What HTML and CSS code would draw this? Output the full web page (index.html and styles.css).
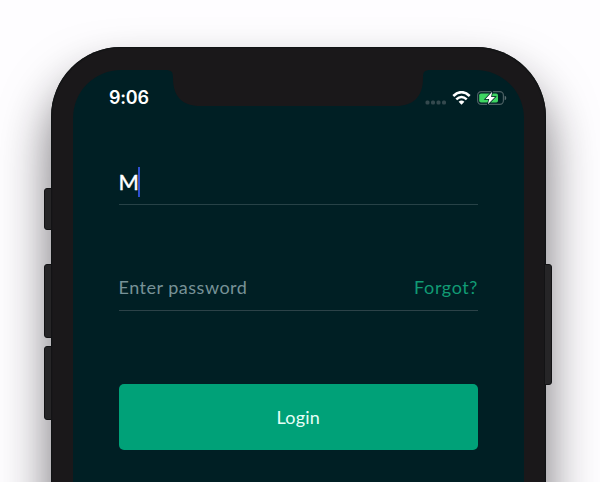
FILE: index.html
```html
<!DOCTYPE html>
<html lang="en">
<head>
<meta charset="utf-8">
<title>Login</title>
<link rel="stylesheet" href="styles.css">
</head>
<body>
<main class="phone">
  <span class="side-key mute"></span>
  <span class="side-key volume-up"></span>
  <span class="side-key volume-down"></span>
  <span class="side-key power"></span>
  <section class="screen">
    <svg class="notch" width="266" height="37" viewBox="0 0 266 37" aria-hidden="true"><path d="M0 0C7 0 8 2 8 8C8 27 18 36 35 36H231C248 36 258 27 258 8C258 2 259 0 266 0Z"/></svg>
    <header class="status">
      <span class="time">9:06</span>
      <div class="indicators">
        <svg class="cellular" width="22" height="5" viewBox="0 0 22 5" aria-hidden="true"><rect x=".5" y=".5" width="4" height="4" rx="1.5"/><rect x="6" y=".5" width="4" height="4" rx="1.5"/><rect x="11.5" y=".5" width="4" height="4" rx="1.5"/><rect x="17" y=".5" width="4" height="4" rx="1.5"/></svg>
        <svg class="wifi" width="19" height="14" viewBox="0 0 18 14" aria-hidden="true"><path class="wave" d="M.8 5Q9 -2.6 17.2 5M3.8 8.4Q9 3.6 14.2 8.4"/><path class="wifi-base" d="M6.1 10.8Q9 8.2 11.9 10.8L9 13.8Z"/></svg>
        <svg class="battery" width="30" height="14" viewBox="0 0 30 14" aria-hidden="true"><rect class="shell" x=".6" y=".6" width="25.8" height="12.8" rx="3.6"/><path class="cap" d="M27.7 4.7Q29.3 5.1 29.3 7T27.7 9.3Z"/><rect class="charge" x="2.2" y="2.4" width="18.8" height="9.2" rx="1.8"/><path class="bolt" d="M15.2 .8L8.5 8H12.2L10.9 13.2L18 5.9H14.1Z"/></svg>
      </div>
    </header>
    <form class="login">
      <div class="field name"><span class="value">M</span><span class="caret"></span></div>
      <div class="field password"><span class="placeholder">Enter password</span><a class="forgot">Forgot?</a></div>
      <button class="submit" type="button">Login</button>
    </form>
  </section>
</main>
</body>
</html>
```
FILE: styles.css
```css
* { box-sizing: border-box; }
html, body { height: 100%; }
body {
  margin: 0;
  overflow: hidden;
  background: #fefdff;
  font-family: Lato, "Liberation Sans", sans-serif;
}
.phone {
  position: relative;
  width: 495.5px;
  height: 600px;
  margin: 46.5px 0 0 50.5px;
  padding: 23px 22.5px;
  border-radius: 70px;
  background: #1a181a;
  box-shadow: 0 30px 50px rgba(20, 17, 22, .6), inset 0 0 1px 1px #101314;
}
.side-key {
  position: absolute;
  left: -6.5px;
  width: 8px;
  border: 1px solid #131315;
  border-radius: 3px 0 0 3px;
  background: #262527;
}
.mute { top: 141.5px; height: 42px; }
.volume-up { top: 217px; height: 74px; }
.volume-down { top: 299.5px; height: 73.5px; }
.power { top: 217px; left: auto; right: -6px; height: 121.5px; border-radius: 0 3px 3px 0; }
.screen {
  position: relative;
  height: 100%;
  padding: 0 45.5px;
  border-radius: 48px;
  background: #001f24;
}
.notch { position: absolute; top: 0; left: 92px; fill: #1a181a; }
.status {
  display: flex;
  align-items: center;
  justify-content: space-between;
  height: 56px;
  margin: 0 -28.5px 0 -9.5px;
}
.time {
  color: #fff;
  font: 600 18px/22px Inter, sans-serif;
  letter-spacing: -.2px;
}
.indicators { display: flex; align-items: center; }
.cellular { margin: 9px 5px 0 0; fill: #34494e; }
.wifi { margin-right: 6px; }
.wave { fill: none; stroke: #fff; stroke-width: 2.6; }
.wifi-base { fill: #fff; }
.shell { fill: none; stroke: #4b6064; stroke-width: 1.2; }
.cap { fill: #5a6c70; }
.charge { fill: #3ed562; }
.bolt { fill: #fff; stroke: #001f24; stroke-width: 1.5; paint-order: stroke; }
.login { margin: 0; }
.field {
  display: flex;
  align-items: center;
  border-bottom: 1px solid #274247;
}
.name { height: 46px; margin-top: 33.5px; }
.value {
  padding-top: 1px;
  color: #fff;
  font-size: 22px;
  line-height: 30px;
  -webkit-text-stroke: .4px #fff;
}
.caret { width: 2.5px; height: 30px; margin-left: -1px; background: #2e50d0; }
.password {
  justify-content: space-between;
  height: 48px;
  margin-top: 57.5px;
  padding-top: 2px;
  border-color: #2c4248;
  font-size: 18px;
}
.placeholder { color: #779297; letter-spacing: .5px; }
.forgot { color: #119b74; letter-spacing: .6px; }
.submit {
  display: block;
  width: 100%;
  height: 66px;
  margin-top: 73px;
  padding: 0;
  border: 0;
  border-radius: 5px;
  background: #00a178;
  color: #e6fff7;
  font: 18px/24px Lato, sans-serif;
  letter-spacing: .2px;
}
```
